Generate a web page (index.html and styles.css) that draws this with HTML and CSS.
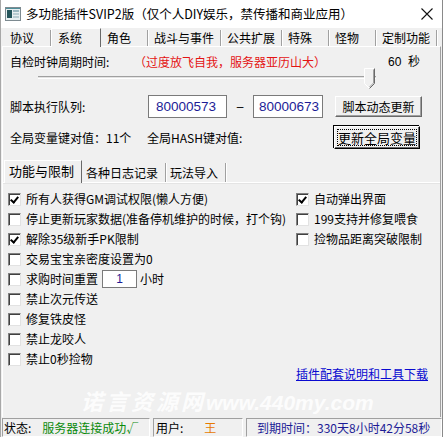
FILE: index.html
```html
<!DOCTYPE html>
<html lang="zh-CN">
<head>
<meta charset="utf-8">
<title>多功能插件SVIP2版</title>
<link rel="stylesheet" href="styles.css">
</head>
<body>
<div class="window">
  <div class="titlebar">
    <svg class="app-icon" width="16" height="14" viewBox="0 0 16 14">
      <rect x="0.5" y="0.5" width="15" height="13" fill="#e8eef0" stroke="#7d8a90"/>
      <rect x="2" y="3" width="5" height="8" fill="#24545a"/>
      <rect x="8" y="3" width="6" height="2" fill="#9bb7c0"/>
      <rect x="8" y="6" width="6" height="2" fill="#b9ccd2"/>
      <rect x="8" y="9" width="6" height="2" fill="#b9ccd2"/>
      <rect x="1" y="1" width="14" height="1" fill="#4f8f9a"/>
    </svg>
    <span class="title">多功能插件SVIP2版（仅个人DIY娱乐，禁传播和商业应用）</span>
    <svg class="close" width="12" height="12" viewBox="0 0 12 12">
      <path d="M0.5 0.5 L11.5 11.5 M11.5 0.5 L0.5 11.5" stroke="#111" stroke-width="1.1" fill="none"/>
    </svg>
  </div>

  <div class="tabs">
    <div class="tab">协议</div>
    <div class="tab active">系统</div>
    <div class="tab">角色</div>
    <div class="tab">战斗与事件</div>
    <div class="tab">公共扩展</div>
    <div class="tab">特殊</div>
    <div class="tab">怪物</div>
    <div class="tab">定制功能</div>
  </div>

  <div class="panel">
    <div class="row row-clock">
      <span class="label clock-label">自检时钟周期时间:</span>
      <span class="warn">（过度放飞自我，服务器亚历山大）</span>
      <span class="secs">60&nbsp;&nbsp;秒</span>
    </div>

    <div class="slider">
      <div class="track"></div>
      <svg class="thumb" width="11" height="21" viewBox="0 0 11 21">
        <path d="M0.5 0.5 H10.5 V15.5 L5.5 20.5 L0.5 15.5 Z" fill="#f0f0f0" stroke="#fff"/>
        <path d="M10.5 0.5 V15.5 L5.5 20.5" fill="none" stroke="#6a6a6a"/>
        <path d="M9.5 1.5 V15 L5.5 19" fill="none" stroke="#a0a0a0"/>
      </svg>
    </div>

    <div class="row row-queue">
      <span class="label queue-label">脚本执行队列:</span>
      <span class="field field-from">80000573</span>
      <span class="dash">–</span>
      <span class="field field-to">80000673</span>
      <button class="btn btn-reload">脚本动态更新</button>
    </div>

    <div class="row row-global">
      <span class="label global-label">全局变量键对值：11个</span>
      <span class="label">全局HASH键对值:</span>
      <button class="btn btn-focus"><span class="focus-ring">更新全局变量</span></button>
    </div>

    <div class="subtabs">
      <div class="subtab active">功能与限制</div>
      <div class="subtab">各种日志记录</div>
      <div class="subtab">玩法导入</div>
    </div>

    <div class="subpanel">
      <div class="col col-left">
        <label class="opt"><span class="cb on"></span>所有人获得GM调试权限(懒人方便)</label>
        <label class="opt"><span class="cb"></span>停止更新玩家数据(准备停机维护的时候，打个钩)</label>
        <label class="opt"><span class="cb on"></span>解除35级新手PK限制</label>
        <label class="opt"><span class="cb"></span>交易宝宝亲密度设置为0</label>
        <label class="opt"><span class="cb"></span>求购时间重置<span class="field field-hours">1</span>小时</label>
        <label class="opt"><span class="cb"></span>禁止次元传送</label>
        <label class="opt"><span class="cb"></span>修复铁皮怪</label>
        <label class="opt"><span class="cb"></span>禁止龙咬人</label>
        <label class="opt"><span class="cb"></span>禁止0秒捡物</label>
      </div>
      <div class="col col-right">
        <label class="opt"><span class="cb on"></span>自动弹出界面</label>
        <label class="opt"><span class="cb"></span>199支持并修复喂食</label>
        <label class="opt"><span class="cb"></span>捡物品距离突破限制</label>
        <a class="link" href="#">插件配套说明和工具下载</a>
      </div>
    </div>
  </div>

  <div class="statusbar">
    <div class="cell cell-state">状态:<span class="ok">服务器连接成功√</span></div>
    <div class="cell cell-user">用户:<span class="user">王</span></div>
    <div class="cell cell-expire">到期时间：330天8小时42分58秒</div>
  </div>

  <div class="mark"><span class="mark-cn">诺言资源网</span><span class="mark-en">www.440my.com</span></div>
</div>
</body>
</html>
```

FILE: styles.css
```css
* {
  box-sizing: border-box;
  margin: 0;
  padding: 0;
}

body {
  width: 443px;
  height: 437px;
  overflow: hidden;
  background: #f0f0f0;
  font: 12px/16px "Noto Sans CJK SC", "Microsoft YaHei", sans-serif;
  color: #000;
}

.window {
  position: relative;
  width: 443px;
  height: 437px;
  display: flex;
  flex-direction: column;
  background: #f0f0f0;
  border-left: 1px solid #a8a8a8;
  border-right: 1px solid #8a8a8a;
}

/* title bar */
.titlebar {
  height: 28px;
  flex: none;
  display: flex;
  align-items: center;
  background: #fff;
  padding-left: 4px;
}

.app-icon {
  flex: none;
}

.title {
  margin-left: 5px;
  font-size: 12.5px;
  color: #000;
  white-space: nowrap;
}

.close {
  margin-left: auto;
  margin-right: 9px;
}

/* main tab strip */
.tabs {
  height: 18px;
  flex: none;
  display: flex;
  align-items: flex-end;
  padding-left: 3px;
  position: relative;
  z-index: 1;
}

.tab {
  height: 16px;
  min-width: 47px;
  padding: 0 6px;
  line-height: 16px;
  border-right: 1px solid #a0a0a0;
  box-shadow: 1px 0 0 #fff;
  white-space: nowrap;
}

.tab.active {
  height: 19px;
  min-width: 50px;
  padding-top: 1px;
  margin-bottom: -1px;
  background: #f0f0f0;
  border-top: 1px solid #fff;
  border-left: 1px solid #fff;
  border-right: 1px solid #696969;
  box-shadow: none;
}

/* main panel */
.panel {
  flex: 1;
  display: flex;
  flex-direction: column;
  margin: 0 1px;
  border-top: 1px solid #fff;
  border-left: 1px solid #fff;
  border-right: 1px solid #a0a0a0;
}

.row {
  display: flex;
  align-items: center;
  padding-left: 7px;
}

.label {
  white-space: nowrap;
}

.row-clock {
  height: 16px;
  margin-top: 7px;
  padding-right: 20px;
}

.clock-label {
  width: 124px;
}

.warn {
  color: #e41414;
  white-space: nowrap;
}

.secs {
  margin-left: auto;
  font-family: "Liberation Sans", Arial, sans-serif;
  font-size: 12px;
}

/* slider */
.slider {
  position: relative;
  height: 22px;
  margin-top: -2px;
  margin-left: 35px;
  width: 338px;
}

.track {
  position: absolute;
  left: 0;
  right: 0;
  top: 8px;
  height: 3px;
  border-top: 1px solid #a0a0a0;
  border-bottom: 1px solid #fff;
  background: #e3e3e3;
}

.thumb {
  position: absolute;
  left: 326px;
  top: 0;
}

/* script queue row */
.row-queue {
  height: 23px;
  margin-top: 5px;
}

.queue-label {
  width: 138px;
}

.field {
  display: flex;
  align-items: center;
  background: #fff;
  border: 1px solid #7a7a7a;
  color: #1c1c96;
  font-family: "Liberation Sans", Arial, sans-serif;
  font-size: 13.5px;
  white-space: nowrap;
  overflow: hidden;
}

.field-from {
  width: 79px;
  height: 23px;
  padding-left: 7px;
}

.dash {
  width: 26px;
  text-align: center;
  font-family: "Liberation Sans", Arial, sans-serif;
  font-size: 12px;
}

.field-to {
  width: 70px;
  height: 23px;
  padding-left: 5px;
}

.btn {
  font: inherit;
  color: #000;
  background: #f0f0f0;
  border: 1px solid;
  border-color: #fff #696969 #696969 #fff;
  box-shadow: inset -1px -1px 0 #a0a0a0;
  white-space: nowrap;
}

.btn-reload {
  margin-left: 12px;
  width: 87px;
  height: 21px;
}

/* global vars row */
.row-global {
  height: 23px;
  margin-top: 8px;
}

.global-label {
  width: 137px;
}

.btn-focus {
  margin-left: auto;
  margin-right: 20px;
  width: 86px;
  height: 23px;
  padding: 2px;
  border-color: #fff #000 #000 #fff;
  box-shadow: inset -1px -1px 0 #696969, -1px -1px 0 #000;
}

.focus-ring {
  display: block;
  height: 17px;
  line-height: 15px;
  border: 1px dotted #000;
  font-size: 13px;
}

/* inner tab strip */
.subtabs {
  height: 22px;
  margin-top: 11px;
  margin-left: 1px;
  display: flex;
  align-items: flex-end;
  position: relative;
  z-index: 1;
}

.subtab {
  height: 19px;
  padding: 0 7px 0 4px;
  line-height: 19px;
  border-right: 1px solid #a0a0a0;
  box-shadow: 1px 0 0 #fff;
  white-space: nowrap;
}

.subtab.active {
  height: 23px;
  line-height: 20px;
  margin-bottom: -1px;
  background: #f0f0f0;
  border-top: 1px solid #fff;
  border-left: 1px solid #fff;
  border-right: 1px solid #696969;
  box-shadow: none;
  font-size: 13px;
}

.subpanel {
  height: 207px;
  flex: none;
  display: flex;
  border-top: 1px solid #fff;
  box-shadow: inset 0 1px 0 #e4e4e4;
  padding-top: 6px;
}

.col {
  display: flex;
  flex-direction: column;
}

.col-left {
  width: 299px;
  padding-left: 5px;
}

.col-right {
  flex: 1;
}

.opt {
  height: 20px;
  display: flex;
  align-items: center;
  white-space: nowrap;
}

.cb {
  position: relative;
  flex: none;
  width: 13px;
  height: 13px;
  margin-right: 5px;
  background: #fff;
  border: 1px solid;
  border-color: #808080 #e2e2e2 #e2e2e2 #808080;
  box-shadow: inset 1px 1px 0 #404040;
}

.cb.on::after {
  content: "";
  position: absolute;
  left: 3px;
  top: 1px;
  width: 3px;
  height: 6px;
  border: solid #000;
  border-width: 0 2px 2px 0;
  transform: rotate(40deg);
}

.field-hours {
  width: 35px;
  height: 18px;
  margin: 0 3px 0 4px;
  justify-content: center;
  font-size: 12px;
}

.link {
  margin-top: auto;
  margin-bottom: 7px;
  align-self: flex-end;
  margin-right: 12px;
  color: #0a0ad0;
  text-decoration: underline;
  white-space: nowrap;
}

/* status bar */
.statusbar {
  height: 20px;
  flex: none;
  display: flex;
  gap: 3px;
  padding-left: 1px;
  padding-top: 1px;
}

.cell {
  height: 19px;
  display: flex;
  align-items: center;
  white-space: nowrap;
  border: 1px solid;
  border-color: #a0a0a0 #fff #fff #a0a0a0;
}

.cell-state {
  width: 148px;
  padding-left: 1px;
}

.ok {
  margin-left: 11px;
  color: #0b8a0b;
}

.cell-user {
  width: 90px;
  padding-left: 2px;
}

.user {
  margin-left: 21px;
  color: #e77a00;
}

.cell-expire {
  flex: 1;
  padding-left: 10px;
  color: #1c1c96;
}

/* site stamp over the lower panel */
.mark {
  position: absolute;
  left: 80px;
  top: 392px;
  color: rgba(255, 255, 255, 0.85);
  font-style: italic;
  font-weight: bold;
  white-space: nowrap;
  pointer-events: none;
}

.mark-cn {
  font-size: 22px;
  letter-spacing: 3px;
}

.mark-en {
  font-family: "Liberation Sans", Arial, sans-serif;
  font-size: 21px;
}
```
